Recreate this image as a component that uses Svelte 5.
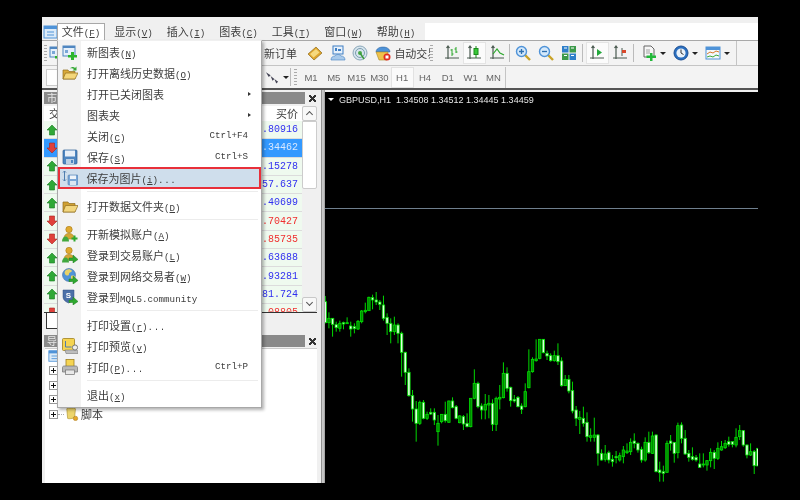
<script>
    const menuNames = [['文件', 'F'], ['显示', 'V'], ['插入', 'I'], ['图表', 'C'], ['工具', 'T'], ['窗口', 'W'], ['帮助', 'H']];

    const periods = ['M1', 'M5', 'M15', 'M30', 'H1', 'H4', 'D1', 'W1', 'MN'];

    const fileMenu = [
        { label: '新图表', key: 'N', icon: 'newchart' },
        { label: '打开离线历史数据', key: 'O', icon: 'openfile' },
        { label: '打开已关闭图表', arrow: true },
        { label: '图表夹', arrow: true },
        { label: '关闭', key: 'C', shortcut: 'Ctrl+F4' },
        { label: '保存', key: 'S', shortcut: 'Ctrl+S', icon: 'save' },
        { label: '保存为图片', key: 'i', dots: true, icon: 'savepic', active: true },
        { sep: true },
        { label: '打开数据文件夹', key: 'D', icon: 'folder' },
        { sep: true },
        { label: '开新模拟账户', key: 'A', icon: 'demo' },
        { label: '登录到交易账户', key: 'L', icon: 'login' },
        { label: '登录到网络交易者', key: 'W', icon: 'globe' },
        { label: '登录到', latin: 'MQL5.community', icon: 'mql' },
        { sep: true },
        { label: '打印设置', key: 'r', dots: true },
        { label: '打印预览', key: 'v', icon: 'preview' },
        { label: '打印', key: 'P', dots: true, shortcut: 'Ctrl+P', icon: 'print' },
        { sep: true },
        { label: '退出', key: 'x' }
    ];

    // the symbol column sits under the open menu, so only direction and price are drawn
    const quotes = [
        { price: '0.80916', up: true, color: 'blue' },
        { price: '1.34462', up: false, color: 'sel' },
        { price: '1.15278', up: true, color: 'blue' },
        { price: '157.637', up: true, color: 'blue' },
        { price: '1.40699', up: true, color: 'blue' },
        { price: '0.70427', up: false, color: 'red' },
        { price: '0.85735', up: false, color: 'red' },
        { price: '1.63688', up: true, color: 'blue' },
        { price: '0.93281', up: true, color: 'blue' },
        { price: '181.724', up: true, color: 'blue' },
        { price: '1.08805', up: false, color: 'red' }
    ];

    const tree = ['', '', '', '脚本'];

    // [high, low, bodyTop, bodyBottom, light]
    const left = [
        [48,130,65,128,1],[97,145,115,128,0],[115,170,115,133,1],[125,155,134,143,1],[122,155,130,145,0],[125,148,128,132,1],
        [112,132,128,131,0],[125,170,138,147,1],[130,160,140,146,1],[120,150,124,147,0],[90,130,93,125,0],[68,100,91,95,0],
        [50,92,52,92,0],[44,88,53,60,1],[36,75,60,66,1],[60,90,66,73,1],[47,122,75,115,1],[100,165,112,130,1],
        [115,190,130,155,1],[110,165,135,155,0],[130,190,135,160,1],[155,290,160,217,1],[215,315,217,277,1],[265,350,277,347,1],
        [330,425,347,387,1],[363,485,387,430,1],[362,435,367,430,0],[360,418,367,415,1],[395,420,403,415,0],[385,405,397,402,1],
        [385,435,397,420,1],[405,497,430,455,0],[402,430,403,425,0],[365,428,403,422,1],[362,428,363,427,0],[352,385,363,383,1],
        [375,418,380,415,1],[405,430,408,428,0],[405,450,410,432,1],[400,442,430,440,1],[355,442,355,440,0],[268,358,310,355,0],
        [305,385,310,380,1],[370,418,378,390,1],[342,418,373,390,0],[345,415,370,375,0],[358,453,370,433,1],[350,453,355,433,0],
        [315,388,352,357,0],[247,355,280,353,0],[262,335,280,325,1],[320,380,322,362,1],[345,368,358,363,1],[348,382,352,380,1],
        [370,402,378,388,1],[310,382,335,380,0],[208,325,275,323,0],[232,278,238,275,0],[178,245,237,242,0],[178,238,178,235,0],
        [178,220,178,218,1],[212,240,220,228,1]
    ];
    const right = [
        [70,95,77,92,1],[62,95,77,92,0],[40,105,77,95,1],[82,170,93,167,1],[135,168,148,167,0],[135,190,148,183,1],
        [155,250,182,243,1],[228,288,240,265,1],[243,312,262,268,0],[230,290,265,280,1],[247,335,277,320,1],[295,335,317,322,0],
        [263,335,315,322,0],[312,407,315,370,1],[358,392,370,390,1],[345,395,372,388,0],[362,400,368,390,1],[375,410,388,395,1],
        [363,400,380,383,1],[368,395,377,390,0],[348,400,360,380,0],[340,372,363,368,0],[325,375,337,365,0],[310,355,333,340,1],
        [337,368,340,360,1],[350,398,358,390,1],[322,395,337,390,0],[305,372,337,368,1],[305,372,318,370,0],[313,427,315,425,1],
        [395,455,420,428,1],[407,455,425,430,1],[332,428,340,427,0],[315,362,333,340,1],[337,398,337,370,1],[278,385,287,368,0],
        [277,340,285,325,1],[300,375,325,372,1],[360,395,370,382,1],[352,392,380,388,1],[375,395,382,390,1],[370,413,402,412,1],
        [370,412,402,405,0],[390,422,392,405,0],[355,412,367,392,0],[360,417,367,385,1],[337,390,355,385,0],[333,362,350,360,0],
        [330,357,340,353,0],[320,350,335,343,1],[335,352,335,343,1],[295,352,322,345,0],[285,330,302,320,0],[300,350,302,345,1],
        [343,385,345,375,1],[340,378,365,375,0],[360,432,365,407,1],[355,408,355,408,1]
    ];

    // values above were read off 3x crops, so scale them back
    const candles = [
        ...left.map((c) => c.map((v, n) => (n < 4 ? 280 + v / 3 : v))),
        ...right.map((c) => c.map((v, n) => (n < 4 ? 330 + v / 3 : v)))
    ].map((c, i) => ({ x: 325.3 + i * 3.635, high: c[0], low: c[1], top: c[2], bottom: c[3], light: c[4] === 1 }));
</script>

{#snippet arrowBadge(color = '#2fa82f')}
    <path d="M7 11h4V8l5 4.500L11 16v-2.500H7z" fill={color} stroke="#1c7c1c" stroke-width=".5" />
{/snippet}

{#snippet person(color = '#e0a92e')}
    <circle cx="7" cy="3.500" r="3.200" fill={color} stroke="#a87a18" stroke-width=".6" />
    <path d="M2 13c0-4 2-5.500 5-5.500s5 1.500 5 5.500z" fill="#d4a535" stroke="#a87a18" stroke-width=".6" />
    <path d="M0 15.500c0-3 1.500-5 3.500-5S7 12.500 7 15.500z" fill="#42a83e" />
{/snippet}

{#snippet axes(color = '#4a5a50')}
    <path d="M4 1v13M1 13h14M2.500 3L4 1l1.500 2" fill="none" stroke={color} stroke-width="1.200" />
{/snippet}

{#snippet icon(name)}
    <svg class="ico" viewBox="0 0 16 16" aria-hidden="true">
        {#if name === 'newchart'}
            <rect x="1" y="2" width="12" height="10" fill="#e6f0fa" stroke="#4f86c0" />
            <path d="M1 2h12v2H1z" fill="#4f86c0" />
            <path d="M3 6h3v3H3z" fill="#7aa6d6" />
            <path d="M9 8h3v3h3v2.500h-3V16H9v-2.500H6V11h3z" fill="#2cb52c" />
        {:else if name === 'openfile'}
            <path d="M1 14V5h5l1 1.500h6V14z" fill="#d9a93a" stroke="#8f6d1e" stroke-width=".7" />
            <path d="M1 14l2.500-6H16l-3 6z" fill="#f4d679" stroke="#8f6d1e" stroke-width=".7" />
            <path d="M8 3.500C9.500 1.500 12 1.500 13 3l1.500-1.500V5.500h-4L12 4c-1-.8-2.500-.8-4-.5z" fill="#35a835" />
        {:else if name === 'save'}
            <rect x="1" y="1" width="14" height="14" rx="1" fill="#4f86c0" stroke="#2d5f96" stroke-width=".7" />
            <rect x="3" y="1.500" width="10" height="6" fill="#e9f0f8" />
            <rect x="4" y="10" width="8" height="5" fill="#bcd0e4" />
            <rect x="9" y="11" width="2" height="3" fill="#4f86c0" />
        {:else if name === 'savepic'}
            <rect x="6" y="5" width="10" height="10" rx="1" fill="#7aa6d6" stroke="#4f7dae" stroke-width=".6" />
            <rect x="8" y="5.500" width="6" height="3.500" fill="#eef4fa" />
            <rect x="8" y="11" width="6" height="4" fill="#dbe6f1" />
            <path d="M2.500 1v10M1 2.500l1.500-1.500L4 2.500M1 9.500L2.500 11 4 9.500" fill="none" stroke="#4f7dae" />
        {:else if name === 'folder'}
            <path d="M1 14V4h5l1 1.500h6V14z" fill="#cf9f32" stroke="#8f6d1e" stroke-width=".7" />
            <path d="M1 14l2.500-6.500H16L13 14z" fill="#f2d67e" stroke="#8f6d1e" stroke-width=".7" />
        {:else if name === 'demo'}
            {@render person()}
            <path d="M9.500 11.500h2v-2h2v2h2v2h-2v2h-2v-2h-2z" fill="#2fa82f" />
        {:else if name === 'login'}
            {@render person()}
            {@render arrowBadge()}
        {:else if name === 'globe'}
            <circle cx="7" cy="7" r="6.500" fill="#4f93d8" stroke="#2d5f96" stroke-width=".5" />
            <path d="M4 2c2-1 5-1 6 1-1 2-3 1-3 3s-3 2-4 0 0-3 1-4zM9 8c2-1 4 0 4 1-1 2-3 3-4 3z" fill="#e8d268" />
            {@render arrowBadge()}
        {:else if name === 'mql'}
            <path d="M1 1h11v7c0 3-3 5-5.500 6C4 13 1 11 1 8z" fill="#4b6fa8" stroke="#2f4d80" stroke-width=".5" />
            <text x="6.500" y="8.500" class="ico-s">S</text>
            {@render arrowBadge()}
        {:else if name === 'preview'}
            <rect x="0.500" y="0.500" width="12" height="12" rx="1" fill="#f5d452" stroke="#a0801e" stroke-width=".8" />
            <path d="M3.500 3v6h6" fill="none" stroke="#4f7dae" />
            <path d="M3 12h11a2 2 0 0 1 2 2v1.500H4z" fill="#bdbdbd" stroke="#777" stroke-width=".6" />
            <circle cx="13" cy="9.500" r="2.600" fill="#eee" stroke="#777" />
        {:else if name === 'print'}
            <rect x="4" y="0.500" width="8" height="7" fill="#f5d452" stroke="#a0801e" stroke-width=".8" />
            <path d="M0.500 8.500C0.500 7 2 7 3 7h10c1 0 2.500 0 2.500 1.500V13H.5z" fill="#b8b8b8" stroke="#707070" stroke-width=".7" />
            <rect x="3.500" y="11" width="9" height="4.500" fill="#e8e8e8" stroke="#707070" stroke-width=".7" />
        {:else if name === 'ticket'}
            <path d="M1 9l8-7 6 6-8 7z" fill="#dfa52c" stroke="#8f6d1e" stroke-width=".7" />
            <path d="M3 9l6-5 3.500 3.500-6 5z" fill="#f6d97e" />
        {:else if name === 'market'}
            <rect x="3" y="1" width="10" height="8" fill="#e6f0fa" stroke="#3f7fc4" />
            <path d="M5 6V3h2v3zM8 6V4h3v2z" fill="#3f7fc4" />
            <path d="M1 15c0-3 2-4 4-4 1-2 5-2 6 0 2 0 4 1 4 4z" fill="#a8c9ea" stroke="#3f7fc4" stroke-width=".6" />
        {:else if name === 'signal'}
            <circle cx="8" cy="8" r="7" fill="#d8e6ee" stroke="#8aa6b8" />
            <circle cx="8" cy="8" r="4.500" fill="none" stroke="#7a9cb0" />
            <circle cx="8" cy="8" r="2" fill="#4aa84a" />
            <path d="M8 8l4 6" stroke="#3a9a3a" stroke-width="1.500" />
        {:else if name === 'auto'}
            <path d="M1 7c0-3 3-5 7-5s7 2 7 5z" fill="#4f93d8" stroke="#2d5f96" stroke-width=".5" />
            <path d="M1 7h12l-1 8H4z" fill="#efc24a" stroke="#a8892a" stroke-width=".6" />
            <circle cx="12" cy="12" r="3.500" fill="#e02c20" />
            <rect x="10.500" y="10.500" width="3" height="3" fill="#fff" />
        {:else if name === 'bars'}
            {@render axes()}
            <path d="M8 4v7M6.500 5H8M8 9h1.500M12 2v6M10.500 4H12M12 7h1.500" fill="none" stroke="#2ca82c" />
        {:else if name === 'candle'}
            {@render axes()}
            <path d="M10 1v12" stroke="#1c8c1c" />
            <rect x="8" y="3.500" width="4" height="6" fill="#38c838" stroke="#1c8c1c" />
        {:else if name === 'line'}
            {@render axes()}
            <path d="M4 9l4-5 3 4 4 2" fill="none" stroke="#2ca82c" stroke-width="1.200" />
        {:else if name === 'zoomin' || name === 'zoomout'}
            <path d="M10 10l5 5" stroke="#c9a227" stroke-width="2.400" />
            <circle cx="6.500" cy="6.500" r="5" fill="#d4e8fa" stroke="#4f93d8" stroke-width="1.400" />
            <path d={name === 'zoomin' ? 'M4 6.500h5M6.500 4v5' : 'M4 6.500h5'} stroke="#2d6fb0" stroke-width="1.300" />
        {:else if name === 'grid'}
            <rect x="1" y="1" width="6.500" height="6.500" fill="#2e7fc9" />
            <rect x="8.500" y="1" width="6.500" height="6.500" fill="#3c9a4a" />
            <rect x="1" y="8.500" width="6.500" height="6.500" fill="#3c9a4a" />
            <rect x="8.500" y="8.500" width="6.500" height="6.500" fill="#2e7fc9" />
            <path d="M3 3h3M10 3h3M3 10.500h3M10 10.500h3" stroke="#fff" />
        {:else if name === 'shift'}
            {@render axes()}
            <path d="M8 4l5 3.500L8 11z" fill="#22a83a" />
        {:else if name === 'scroll'}
            {@render axes()}
            <path d="M10 3v8" stroke="#4a5a50" />
            <path d="M10 5h4v3h-4z" fill="#d8482a" />
        {:else if name === 'plus'}
            <path d="M3 1h7l3 3v8H3z" fill="#f6f6f6" stroke="#666" />
            <rect x="5" y="4" width="4" height="5" fill="#ccc" />
            <path d="M9 8h2.500v2.500H15V13h-3.500v3H9v-3H5.500v-2.500H9z" fill="#22b83a" />
        {:else if name === 'clock'}
            <circle cx="8" cy="8" r="7" fill="#2a6fc0" stroke="#1b4f94" />
            <circle cx="8" cy="8" r="4.600" fill="#eaf2fa" />
            <path d="M8 4.500V8l2.500 1.500" fill="none" stroke="#333" />
        {:else if name === 'template'}
            <rect x="1" y="2" width="14" height="12" fill="#f4f8fc" stroke="#4f93d8" />
            <path d="M1 2h14v3H1z" fill="#4f93d8" />
            <path d="M2 9l3-2 3 1 3-2 3 1" fill="none" stroke="#d87a2a" />
            <path d="M2 12l3-1 3 1 3-2 3 1" fill="none" stroke="#3ca83c" />
        {:else if name === 'tools'}
            <path d="M1 3l5 3-2 2zM6 7l4 3-2 2zM10 10l4 3-2 2z" fill="#445" />
        {:else if name === 'terminal'}
            <rect x="1" y="2" width="13" height="12" fill="#dcebf8" stroke="#4f93d8" />
            <path d="M1 2h13v3H1z" fill="#4f93d8" />
            <path d="M4 8h7M4 11h7" stroke="#4f93d8" />
        {:else if name === 'scriptfile'}
            <path d="M2 2c2-1 8-1 10 0l-1 9c0 2-6 3-8 2z" fill="#edd56c" stroke="#a98d2a" stroke-width=".7" />
            <circle cx="12" cy="13" r="2.500" fill="#e6a82a" stroke="#a8761a" stroke-width=".6" />
        {/if}
    </svg>
{/snippet}

{#snippet mnemonic(item)}
    {item.label}{#if item.latin}<span class="lat">{item.latin}</span>{/if}{#if item.key}<span class="lat">(<u>{item.key}</u>)</span>{/if}{#if item.dots}<span class="lat dots">...</span>{/if}
{/snippet}

<div class="window">
    <div class="strip"></div>

    <div class="menubar">
        <div class="app-icon">{@render icon('terminal')}</div>
        {#each menuNames as [name, key], i}
            <div class="top-item" class:open={i === 0}>{name}<span class="lat">(<u>{key}</u>)</span></div>
        {/each}
        <div class="menubar-rest"></div>
    </div>

    <div class="toolbar row1">
        <div class="grip"></div>
        <div class="tb-first">{@render icon('newchart')}</div>
        <div class="under-menu"></div>
        <span class="tb-text">新订单</span>
        <div class="tb">{@render icon('ticket')}</div>
        <div class="tb">{@render icon('market')}</div>
        <div class="tb">{@render icon('signal')}</div>
        <div class="tb">{@render icon('auto')}</div>
        <span class="tb-text auto">自动交易</span>
        <div class="grip edge"></div>
        <div class="group">
            <div class="tb">{@render icon('bars')}</div>
            <div class="tb on">{@render icon('candle')}</div>
            <div class="tb">{@render icon('line')}</div>
            <div class="sep"></div>
            <div class="tb">{@render icon('zoomin')}</div>
            <div class="tb">{@render icon('zoomout')}</div>
            <div class="tb">{@render icon('grid')}</div>
            <div class="sep wide"></div>
            <div class="tb on">{@render icon('shift')}</div>
            <div class="tb">{@render icon('scroll')}</div>
            <div class="sep wide"></div>
            <div class="tb drop">{@render icon('plus')}<i></i></div>
            <div class="tb drop">{@render icon('clock')}<i></i></div>
            <div class="tb drop">{@render icon('template')}<i></i></div>
        </div>
    </div>

    <div class="toolbar row2">
        <div class="tb-box"></div>
        <div class="under-menu two"></div>
        <div class="tb drop small">{@render icon('tools')}<i></i></div>
        <div class="sep tight"></div>
        <div class="grip"></div>
        <div class="periods">
            {#each periods as p}
                <div class="period" class:on={p === 'H1'}>{p}</div>
            {/each}
        </div>
    </div>

    <div class="main">
        <div class="side">
            <div class="title"><span>市</span></div>
            <button class="close" aria-label="close"></button>

            <div class="watch">
                <div class="table">
                    <div class="head">
                        <span>交</span>
                        <span>买价</span>
                    </div>
                    <div class="rows">
                        {#each quotes as q}
                            <div class="row" class:sel={q.color === 'sel'}>
                                <svg class="dir" viewBox="0 0 12 12" aria-hidden="true">
                                    {#if q.up}
                                        <path d="M6 1l5 5H8.500v5h-5V6H1z" fill="#2fa836" stroke="#1a7a22" stroke-width=".6" />
                                    {:else}
                                        <path d="M6 11L1 6h2.500V1h5v5H11z" fill="#e0403a" stroke="#a82420" stroke-width=".6" />
                                    {/if}
                                </svg>
                                <span class="price {q.color}">{q.price}</span>
                            </div>
                        {/each}
                    </div>
                </div>
                <div class="scroll">
                    <div class="sbtn up"></div>
                    <div class="thumb"></div>
                    <div class="sbtn down"></div>
                </div>
            </div>

            <div class="tabs"><div class="tab"></div></div>

            <div class="title nav"><span>导</span></div>
            <button class="close second" aria-label="close"></button>

            <div class="tree">
                <div class="root">{@render icon('terminal')}</div>
                {#each tree as t}
                    <div class="node">
                        <span class="plus"></span>
                        <span class="dots-h"></span>
                        {@render icon('scriptfile')}
                        <span>{t}</span>
                    </div>
                {/each}
            </div>
        </div>

        <div class="split"></div>

        <div class="chart">
            <div class="chart-head">
                <i></i>
                <span>GBPUSD,H1&nbsp; 1.34508 1.34512 1.34445 1.34459</span>
            </div>
            <div class="bid"></div>
            <svg class="candles" viewBox="325 92 433 391" aria-hidden="true">
                {#each candles as c}
                    <line x1={c.x} x2={c.x} y1={c.high} y2={c.low} stroke="#00d800" />
                    <rect
                        x={c.x - 1.2}
                        y={c.top}
                        width="2.400"
                        height={Math.max(c.bottom - c.top, 1)}
                        fill={c.light ? '#e2ffe2' : '#008a00'}
                        stroke="#00e000"
                        stroke-width=".8"
                    />
                {/each}
            </svg>
        </div>
    </div>

    <div class="menu">
        {#each fileMenu as item}
            {#if item.sep}
                <div class="menu-sep"></div>
            {:else}
                <div class="menu-item" class:active={item.active}>
                    <span class="menu-ico">{#if item.icon}{@render icon(item.icon)}{/if}</span>
                    <span class="menu-label">{@render mnemonic(item)}</span>
                    {#if item.shortcut}<span class="shortcut lat">{item.shortcut}</span>{/if}
                    {#if item.arrow}<i class="sub"></i>{/if}
                </div>
            {/if}
        {/each}
    </div>
</div>

<style>
    :global(body) {
        margin: 0;
        background: #000;
    }

    .window {
        position: relative;
        width: 716px;
        height: 466px;
        margin: 17px 0 0 42px;
        background: #f0f0f0;
        overflow: hidden;
        font-family: "Noto Sans CJK SC", "Liberation Sans", sans-serif;
        font-size: 11px;
        color: #3c3c3c;
        filter: blur(0.35px);
    }

    .lat {
        font-family: "Liberation Mono", monospace;
        font-size: 9.2px;
    }

    .ico {
        display: block;
        width: 16px;
        height: 16px;
    }

    .ico-s {
        font: bold 8px "Liberation Sans", sans-serif;
        fill: #fff;
        text-anchor: middle;
    }

    .strip {
        height: 6px;
    }

    .menubar {
        display: flex;
        align-items: center;
        height: 17px;
        border-bottom: 1px solid #a8a8a8;
    }

    .app-icon {
        width: 14px;
        margin-left: 1px;
    }

    .top-item {
        flex: none;
        width: 48px;
        height: 17px;
        margin-right: 4.500px;
        line-height: 17px;
        text-align: center;
        white-space: nowrap;
    }

    .top-item.open {
        box-sizing: border-box;
        border: 1px solid #a8a8a8;
        border-bottom: 0;
        background: #fff;
        line-height: 15px;
    }

    .menubar-rest {
        flex: 1;
        height: 17px;
        background: #fff;
    }

    .toolbar {
        display: flex;
        align-items: center;
        background: #f3f3f3;
    }

    .row1 {
        height: 24px;
        border-bottom: 1px solid #c4c4c4;
    }

    .row2 {
        height: 22px;
        border-bottom: 2px solid #555;
    }

    .grip {
        flex: none;
        width: 3px;
        height: 16px;
        margin: 0 2px;
        background: repeating-linear-gradient(#aaa 0 1px, #f3f3f3 1px 3px);
    }

    .grip.edge {
        margin: 0 4px 0 0;
    }

    .tb-first {
        flex: none;
        width: 11px;
        overflow: hidden;
    }

    /* buttons here are covered by the open menu */
    .under-menu {
        flex: none;
        width: 204px;
    }

    .under-menu.two {
        width: 207px;
    }

    .tb-text {
        flex: none;
        margin-right: 7px;
        font-size: 11px;
        white-space: nowrap;
    }

    .tb-text.auto {
        width: 36px;
        margin: 0;
        overflow: hidden;
    }

    .tb {
        display: flex;
        flex: none;
        align-items: center;
        justify-content: center;
        box-sizing: border-box;
        width: 22.600px;
        height: 22px;
    }

    .tb.on {
        background: #fbfbfb;
        border: 1px solid #e4e4e4;
    }

    .tb.drop {
        width: 32px;
        gap: 3px;
    }

    .tb.drop i,
    .chart-head i {
        width: 0;
        height: 0;
        border: 3px solid transparent;
        border-top: 3px solid #222;
        border-bottom: 0;
    }

    .tb.small {
        width: 24px;
    }

    .group {
        display: flex;
        align-items: center;
        height: 24px;
        padding: 0 3px 0 3px;
        border-right: 1px solid #c4c4c4;
    }

    .sep {
        flex: none;
        width: 1px;
        height: 18px;
        margin: 0 2px 0 1px;
        background: #bbb;
    }

    .sep.wide {
        margin: 0 3px 0 2px;
    }

    .sep.tight {
        margin: 0 1px;
    }

    .tb-box {
        flex: none;
        width: 12px;
        height: 17px;
        margin-left: 4px;
        background: #fff;
        border: 1px solid #ccc;
        box-sizing: border-box;
    }

    .periods {
        display: flex;
        height: 21px;
        margin-left: 0.600px;
        border-right: 1px solid #c4c4c4;
    }

    .period {
        box-sizing: border-box;
        width: 22.800px;
        height: 21px;
        font: 9.500px/21px "Liberation Sans", sans-serif;
        text-align: center;
        color: #666;
    }

    .period.on {
        background: #fafafa;
        border: 1px solid #e2e2e2;
        line-height: 19px;
    }

    .main {
        display: flex;
        height: 393px;
    }

    .side {
        position: relative;
        flex: none;
        box-sizing: border-box;
        width: 279px;
        padding: 2px 0 0 2px;
    }

    .title {
        width: 261px;
        height: 12px;
        background: #8a8a8a;
        overflow: hidden;
        font-size: 10px;
        line-height: 12px;
        color: #e8e8e8;
    }

    .title span {
        padding-left: 3px;
    }

    .close {
        position: absolute;
        top: 2px;
        left: 265px;
        width: 10px;
        height: 12px;
        padding: 0;
        border: 0;
        background:
            linear-gradient(45deg, transparent 42%, #333 42% 58%, transparent 58%) center / 7px 7px no-repeat,
            linear-gradient(-45deg, transparent 42%, #333 42% 58%, transparent 58%) center / 7px 7px no-repeat;
    }

    .close.second {
        top: 245px;
    }

    .watch {
        display: flex;
        margin-top: 2px;
        height: 206px;
        width: 273px;
        border-bottom: 1px solid #333;
    }

    .table {
        width: 258px;
        background: #fff;
    }

    .head {
        display: flex;
        justify-content: space-between;
        height: 15px;
        padding: 0 4px 0 5px;
        line-height: 15px;
        font-size: 11px;
        background: #fff;
    }

    .rows {
        height: 191px;
        overflow: hidden;
    }

    .row {
        display: flex;
        align-items: center;
        box-sizing: border-box;
        height: 18.300px;
        padding: 0 4px 0 2px;
        background: #effaef;
        border-bottom: 1px solid #dcdcdc;
    }

    .row.sel {
        background: #3399ff;
    }

    .dir {
        width: 12px;
        height: 12px;
    }

    .price {
        margin-left: auto;
        font-family: "Liberation Mono", monospace;
        font-size: 10px;
    }

    .price.blue {
        color: #3030f0;
    }

    .price.red {
        color: #f03030;
    }

    .price.sel {
        color: #d8e8ff;
    }

    .scroll {
        display: flex;
        flex-direction: column;
        width: 15px;
    }

    .sbtn {
        box-sizing: border-box;
        height: 15px;
        background: #f8f8f8;
        border: 1px solid #c8c8c8;
        border-radius: 2px;
        position: relative;
    }

    .sbtn::after {
        content: "";
        position: absolute;
        left: 4px;
        width: 4px;
        height: 4px;
        border: solid #555;
        border-width: 1px 0 0 1px;
        transform: rotate(45deg);
        top: 5px;
    }

    .sbtn.down::after {
        transform: rotate(225deg);
        top: 2px;
    }

    .thumb {
        box-sizing: border-box;
        height: 68px;
        margin-bottom: auto;
        background: #fff;
        border: 1px solid #ccc;
        border-radius: 0 0 2px 2px;
    }

    .tabs {
        height: 19px;
        margin-bottom: 3px;
        overflow: hidden;
    }

    .tab {
        width: 11px;
        height: 15px;
        margin-left: 2px;
        background: #fff;
        border-left: 1px solid #333;
        border-bottom: 1px solid #333;
    }

    .nav {
        margin-bottom: 1px;
    }

    .tree {
        width: 272px;
        height: 135px;
        background: #fff;
        border-top: 1px solid #ccc;
        box-sizing: border-box;
        margin-left: 1px;
    }

    .root {
        height: 14px;
        margin-left: 3px;
    }

    .root .ico,
    .node .ico {
        width: 14px;
        height: 14px;
    }

    .node {
        display: flex;
        align-items: center;
        height: 14.700px;
        padding-left: 4px;
        font-size: 11px;
        white-space: nowrap;
    }

    .plus {
        flex: none;
        box-sizing: border-box;
        width: 9px;
        height: 9px;
        border: 1px solid #999;
        background:
            linear-gradient(#111, #111) center / 5px 1px no-repeat,
            linear-gradient(#111, #111) center / 1px 5px no-repeat,
            #fff;
    }

    .dots-h {
        flex: none;
        width: 6px;
        margin: 0 1px 0 0;
        border-top: 1px dotted #aaa;
    }

    .node .ico + span {
        margin-left: 2px;
    }

    .split {
        flex: none;
        width: 4px;
        background: linear-gradient(90deg, #777, #d8d8d8 45%, #999);
    }

    .chart {
        position: relative;
        flex: 1;
        margin-top: 2px;
        background: #000;
        overflow: hidden;
    }

    .chart-head {
        display: flex;
        align-items: center;
        gap: 5px;
        height: 15px;
        padding-left: 3px;
        font: 9px "Liberation Sans", sans-serif;
        color: #e4e4e4;
    }

    .chart-head i {
        border-top-color: #fff;
        border-width: 3.500px 3.500px 0;
    }

    .bid {
        position: absolute;
        top: 116px;
        left: 0;
        right: 0;
        height: 1px;
        background: #6f7f8e;
    }

    .candles {
        position: absolute;
        inset: 0;
        width: 433px;
        height: 391px;
    }

    .menu {
        position: absolute;
        top: 23px;
        left: 15px;
        box-sizing: border-box;
        width: 205px;
        height: 368px;
        background: linear-gradient(90deg, #f2f2f2 23px, #fff 23px);
        border: 1px solid #a8a8a8;
        border-top-color: #f0f0f0;
        box-shadow: 2px 2px 3px rgba(0, 0, 0, 0.3);
    }

    .menu-item {
        display: flex;
        align-items: center;
        box-sizing: border-box;
        height: 21px;
        padding-right: 13px;
        white-space: nowrap;
    }

    .menu-item.active {
        height: 22px;
        margin-bottom: -1px;
        background: #cfdeec;
        border: 2.500px solid #e8303a;
    }

    .menu-ico {
        flex: none;
        box-sizing: border-box;
        width: 29px;
        padding-left: 4px;
    }

    .menu-item.active .menu-ico {
        width: 26.500px;
        padding-left: 1.500px;
    }

    .menu-label {
        font-size: 11px;
    }

    .dots {
        letter-spacing: 0.6px;
    }

    .shortcut {
        margin-left: auto;
    }

    .sub {
        margin-left: auto;
        margin-right: -3px;
        width: 0;
        height: 0;
        border: 2.500px solid transparent;
        border-left: 3px solid #333;
        border-right: 0;
    }

    .menu-sep {
        height: 1px;
        margin: 3px 3px 3px 29px;
        background: #ececec;
    }
</style>
